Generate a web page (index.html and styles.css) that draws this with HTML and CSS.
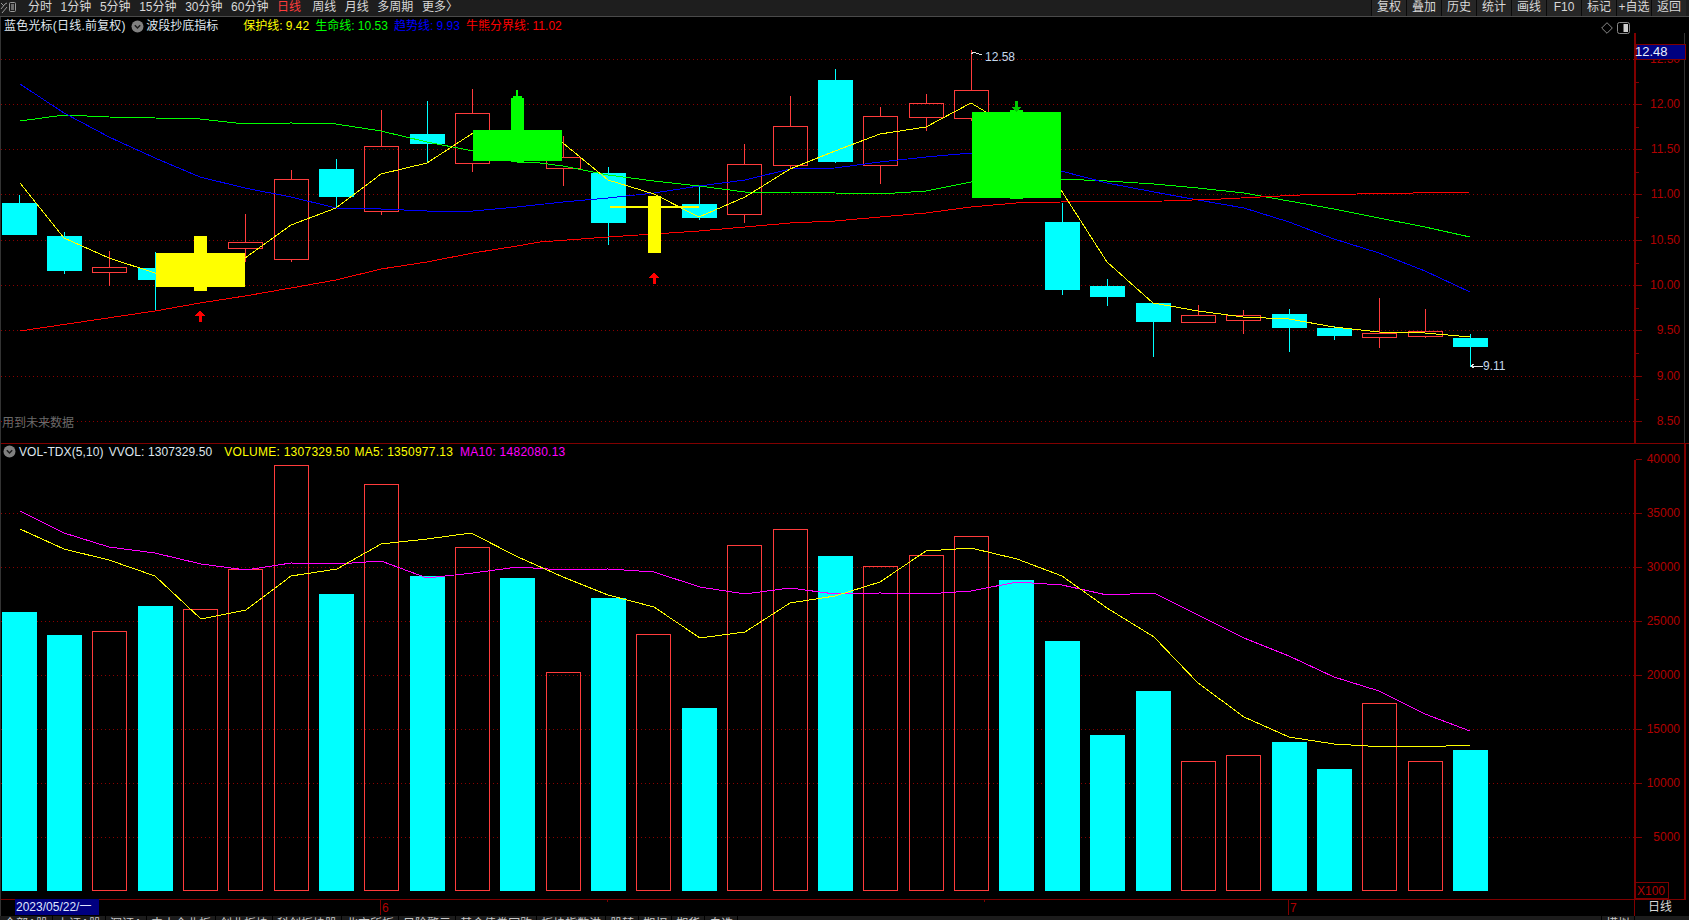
FILE: index.html
```html
<!DOCTYPE html>
<html lang="zh-CN">
<head>
<meta charset="utf-8">
<title>蓝色光标 日线</title>
<link rel="stylesheet" href="styles.css">
</head>
<body>
<div class="app">
  <header class="topbar">
    <svg class="app-icon" width="17" height="13" viewBox="0 0 17 13"><path class="app-icon-line" d="M1 2l3 3M1 8l4-5 2-1M2 12l5-6"/><rect class="app-icon-line" x="9.5" y="1.5" width="6" height="9" rx="1"/><path class="app-icon-fill" d="M11 3h3v6h-3z"/></svg>
    <nav class="periods">
      <span>分时</span><span>1分钟</span><span>5分钟</span><span>15分钟</span><span>30分钟</span><span>60分钟</span><span class="period-on">日线</span><span>周线</span><span>月线</span><span>多周期</span><span>更多〉</span>
    </nav>
    <div class="tools">
      <span>复权</span><span>叠加</span><span>历史</span><span>统计</span><span>画线</span><span>F10</span><span>标记</span><span>+自选</span><span>返回</span>
    </div>
  </header>

  <main class="panels">
    <section class="panel">
      <div class="legend legend-price">
        <span class="title title-wide">蓝色光标(日线.前复权)</span>
        <svg class="badge" width="13" height="13" viewBox="0 0 13 13"><circle class="badge-disc" cx="6.5" cy="6.5" r="6"/><path class="badge-mark" d="M3.8 5.2l2.7 2.8 2.7-2.8"/></svg>
        <span class="title">波段抄底指标</span>
        <span class="readouts">
          <span class="c-yellow">保护线: 9.42</span>
          <span class="c-green">生命线: 10.53</span>
          <span class="c-blue">趋势线: 9.93</span>
          <span class="c-red">牛熊分界线: 11.02</span>
        </span>
        <span class="corner-icons">
          <svg width="12" height="12" viewBox="0 0 12 12"><path class="corner-line" d="M6 .7L11.3 6 6 11.3.7 6z"/></svg>
          <svg width="13" height="12" viewBox="0 0 13 12"><rect class="corner-line" x=".5" y=".5" width="12" height="11" rx="2"/><path class="corner-fill" d="M6.5 2H11v8H6.5z"/></svg>
        </span>
      </div>
      <svg class="chart" width="1688" height="410" viewBox="1 33 1688 410" shape-rendering="crispEdges">
        <path class="grid" d="M1 59.5H1634M1 104.5H1634M1 149.5H1634M1 194.5H1634M1 240.5H1634M1 285.5H1634M1 330.5H1634M1 376.5H1634M1 421.5H1634"/>
        <!-- axis -->
        <path class="axis" d="M1634.5 33V443M1635.5 33V443"/>
        <path class="edge" d="M1684.5 33V443"/>
        <path class="axis" d="M1636 59.5h6M1636 104.5h6M1636 149.5h6M1636 194.5h6M1636 240.5h6M1636 285.5h6M1636 330.5h6M1636 376.5h6M1636 421.5h6M1636 82.5h3M1636 127.5h3M1636 172.5h3M1636 217.5h3M1636 263.5h3M1636 308.5h3M1636 353.5h3M1636 399.5h3"/>
        <g class="axis-label">
          <text x="1680" y="63">12.50</text><text x="1680" y="108">12.00</text><text x="1680" y="153">11.50</text><text x="1680" y="198">11.00</text><text x="1680" y="244">10.50</text><text x="1680" y="289">10.00</text><text x="1680" y="334">9.50</text><text x="1680" y="380">9.00</text><text x="1680" y="425">8.50</text>
        </g>
        <rect class="price-box" x="1636" y="44.5" width="49" height="15"/>
        <text class="price-text" x="1635" y="55.5">12.48</text>

        <!-- candles: falling -->
        <path class="wick-down" d="M19.5 195V203M64.5 232V236M64.5 271V274M155.5 252V311M336.5 159V169M336.5 197V208M427.5 101V134M427.5 144V163M608.5 167V173M608.5 223V245M699.5 187V204M699.5 218V220M835.5 69V80M835.5 162V163M1062.5 203V222M1062.5 290V295M1107.5 279V286M1107.5 297V306M1153.5 322V357M1289.5 309V314M1289.5 328V352M1334.5 326V328M1334.5 336V340M1470.5 334V338M1470.5 347V367"/>
        <g class="body-down">
          <rect x="2" y="203" width="35" height="32"/><rect x="47" y="236" width="35" height="35"/><rect x="138" y="268" width="35" height="12"/><rect x="319" y="169" width="35" height="28"/><rect x="410" y="134" width="35" height="10"/><rect x="591" y="173" width="35" height="50"/><rect x="682" y="204" width="35" height="14"/><rect x="818" y="80" width="35" height="82"/><rect x="1045" y="222" width="35" height="68"/><rect x="1090" y="286" width="35" height="11"/><rect x="1136" y="303" width="35" height="19"/><rect x="1272" y="314" width="35" height="14"/><rect x="1317" y="328" width="35" height="8"/><rect x="1453" y="338" width="35" height="9"/>
        </g>
        <!-- candles: rising -->
        <path class="wick-up" d="M109.5 251V267M109.5 272V286M245.5 214V242M245.5 248V262M291.5 170V179M291.5 259V262M381.5 110V146M381.5 211V215M472.5 89V113M472.5 163V172M563.5 136V157M563.5 168V186M744.5 144V164M744.5 214V223M790.5 96V126M790.5 165V168M880.5 107V116M880.5 165V184M926.5 94V103M926.5 117V131M971.5 50V90M971.5 118V121M1198.5 305V315M1198.5 322V323M1243.5 310V315M1243.5 320V334M1379.5 298V333M1379.5 337V348M1425.5 309V331M1425.5 336V338"/>
        <g class="body-up">
          <rect x="92.5" y="267.5" width="34" height="5"/><rect x="228.5" y="242.5" width="34" height="6"/><rect x="274.5" y="179.5" width="34" height="80"/><rect x="364.5" y="146.5" width="34" height="65"/><rect x="455.5" y="113.5" width="34" height="50"/><rect x="546.5" y="157.5" width="34" height="11"/><rect x="727.5" y="164.5" width="34" height="50"/><rect x="773.5" y="126.5" width="34" height="39"/><rect x="863.5" y="116.5" width="34" height="49"/><rect x="909.5" y="103.5" width="34" height="14"/><rect x="954.5" y="90.5" width="34" height="28"/><rect x="1181.5" y="315.5" width="34" height="7"/><rect x="1226.5" y="315.5" width="34" height="5"/><rect x="1362.5" y="333.5" width="34" height="4"/><rect x="1408.5" y="331.5" width="34" height="5"/>
        </g>
        <!-- moving averages -->
        <polyline class="ma-green" points="20,121 64,115 109,117 155,118 200,119 245,124 291,123 336,124 381,131 427,142 473,151 517,162 540,163 563,166 608,175 654,181 699,186 745,192 790,192 835,193 880,194 926,191 971,182 1016,178 1061,179 1107,181 1154,184 1198,188 1244,193 1289,201 1334,209 1379,218 1425,227 1470,237"/>
        <polyline class="ma-blue" points="20,84 64,113 109,137 155,158 200,177 245,188 291,197 336,208 381,209 427,211 473,211 517,207 563,202 608,198 654,193 699,186 745,180 790,169 835,168 880,162 926,157 971,153 1016,160 1061,171 1107,183 1154,192 1198,200 1244,208 1289,222 1334,239 1379,253 1425,271 1470,292"/>
        <polyline class="ma-red" points="20,331 155,311 200,303 245,296 291,288 336,280 381,269 427,262 473,253 517,246 540,242 608,237 654,234 699,231 745,227 790,223 835,221 880,217 926,213 971,207 1016,203 1061,202 1164,201 1221,199 1300,195 1357,194 1470,192"/>
        <polyline class="ma-yellow" points="20,183 64,238 109,258 155,273 200,280 245,258 291,225 336,208 381,174 427,163 473,133 517,135 563,143 608,180 654,194 699,217 745,197 790,169 835,151 880,134 926,127 971,103 1016,130 1061,190 1107,262 1153,303 1198,311 1243,317 1289,319 1334,327 1379,332 1425,333 1470,337"/>
        <!-- signals -->
        <g class="signal-yellow">
          <rect x="156" y="253" width="89" height="34"/><rect x="194" y="236" width="13" height="55"/><rect x="648" y="196" width="13" height="57"/><rect x="610" y="206" width="89" height="2"/>
        </g>
        <g class="signal-green">
          <rect x="473" y="130" width="89" height="31"/><rect x="511" y="98" width="13" height="64"/><rect x="516" y="90" width="2" height="8"/><rect x="513" y="96" width="9" height="2"/><rect x="972" y="112" width="89" height="86"/><rect x="1010" y="110" width="13" height="89"/>
        </g>
        <path class="arrow-green" d="M1015 101h3v6h4l-5.500 5-5.500-5h4z"/>
        <path class="arrow-red" d="M200 310l5 6h-3.500v6h-3v-6H195zM654 272l5 6h-3.500v6h-3v-6H649z"/>
        <!-- extremes -->
        <path class="pointer" d="M971 54l3-2 2 1 3 1h3M1471 366h12M1471 366l3-2M1471 366l3 2"/>
        <text class="extreme" x="985" y="61">12.58</text>
        <text class="extreme" x="1483" y="370">9.11</text>
      </svg>
      <p class="note">用到未来数据</p>
    </section>

    <section class="panel panel-volume">
      <div class="legend legend-volume">
        <svg class="badge" width="13" height="13" viewBox="0 0 13 13"><circle class="badge-disc" cx="6.5" cy="6.5" r="6"/><path class="badge-mark" d="M3.800 5.200l2.700 2.800 2.700-2.800"/></svg>
        <span class="title title-tight">VOL-TDX(5,10)</span>
        <span class="title title-tight">VVOL: 1307329.50</span>
        <span class="c-yellow vol-value vol-first">VOLUME: 1307329.50</span>
        <span class="c-yellow vol-value">MA5: 1350977.13</span>
        <span class="c-magenta vol-value vol-last">MA10: 1482080.13</span>
      </div>
      <svg class="chart" width="1688" height="439" viewBox="1 460 1688 439" shape-rendering="crispEdges">
        <path class="grid" d="M1 513.500H1634M1 567.500H1634M1 621.500H1634M1 675.500H1634M1 729.500H1634M1 783.500H1634M1 837.500H1634"/>
        <path class="axis" d="M1634.500 460V899M1635.500 460V899M1684.500 444V899M1685.500 444V899"/>
        <path class="axis" d="M1636 459.500h6M1636 513.500h6M1636 567.500h6M1636 621.500h6M1636 675.500h6M1636 729.500h6M1636 783.500h6M1636 837.500h6"/>
        <g class="axis-label">
          <text x="1680" y="463">40000</text><text x="1680" y="517">35000</text><text x="1680" y="571">30000</text><text x="1680" y="625">25000</text><text x="1680" y="679">20000</text><text x="1680" y="733">15000</text><text x="1680" y="787">10000</text><text x="1680" y="841">5000</text>
        </g>
        <rect class="unit-box" x="1635.500" y="882.500" width="33" height="16"/>
        <text class="unit-text" x="1637" y="895">X100</text>
        <g class="body-down">
          <rect x="2" y="612" width="35" height="279"/><rect x="47" y="635" width="35" height="256"/><rect x="138" y="606" width="35" height="285"/><rect x="319" y="594" width="35" height="297"/><rect x="410" y="576" width="35" height="315"/><rect x="500" y="578" width="35" height="313"/><rect x="591" y="598" width="35" height="293"/><rect x="682" y="708" width="35" height="183"/><rect x="818" y="556" width="35" height="335"/><rect x="999" y="580" width="35" height="311"/><rect x="1045" y="641" width="35" height="250"/><rect x="1090" y="735" width="35" height="156"/><rect x="1136" y="691" width="35" height="200"/><rect x="1272" y="742" width="35" height="149"/><rect x="1317" y="769" width="35" height="122"/><rect x="1453" y="750" width="35" height="141"/>
        </g>
        <g class="body-up">
          <rect x="92.500" y="631.500" width="34" height="259"/><rect x="183.500" y="609.500" width="34" height="281"/><rect x="228.500" y="569.500" width="34" height="321"/><rect x="274.500" y="465.500" width="34" height="425"/><rect x="364.500" y="484.500" width="34" height="406"/><rect x="455.500" y="547.500" width="34" height="343"/><rect x="546.500" y="672.500" width="34" height="218"/><rect x="636.500" y="634.500" width="34" height="256"/><rect x="727.500" y="545.500" width="34" height="345"/><rect x="773.500" y="529.500" width="34" height="361"/><rect x="863.500" y="566.500" width="34" height="324"/><rect x="909.500" y="555.500" width="34" height="335"/><rect x="954.500" y="536.500" width="34" height="354"/><rect x="1181.500" y="761.500" width="34" height="129"/><rect x="1226.500" y="755.500" width="34" height="135"/><rect x="1362.500" y="703.500" width="34" height="187"/><rect x="1408.500" y="761.500" width="34" height="129"/>
        </g>
        <polyline class="ma-magenta" points="20,511 64,533 109,547 155,553 201,564 246,570 291,563 337,564 381,561 427,578 473,573 518,567 563,570 608,569 654,572 700,587 745,594 790,588 835,594 880,593 926,594 971,591 1017,582 1062,585 1107,595 1154,593 1198,615 1244,638 1289,656 1334,677 1379,691 1425,714 1470,731"/>
        <polyline class="ma-yellow" points="20,529 64,549 109,560 155,576 201,619 246,610 291,576 337,569 381,544 427,539 471,533 518,557 563,577 608,595 654,607 700,638 745,632 790,603 835,596 880,582 926,551 971,548 1017,559 1062,576 1107,608 1154,637 1198,683 1244,717 1289,737 1334,744 1368,746 1446,746 1470,745"/>
      </svg>
    </section>

    <div class="timebar">
      <svg class="time-svg" width="1688" height="17" viewBox="1 899 1688 17" shape-rendering="crispEdges">
        <path class="axis" d="M1 899.500H1686M1634.500 899V916M1635.500 899V900M380.500 899V915M607.500 899V902M984.500 899V902M1288.500 899V915"/>
        <rect class="date-box" x="15" y="899" width="84" height="16"/>
        <text class="date-text" x="16" y="911">2023/05/22/一</text>
        <text class="tick-text" x="382" y="912">6</text>
        <text class="tick-text" x="1290" y="912">7</text>
        <text class="period-text" x="1648" y="911">日线</text>
      </svg>
    </div>
  </main>

  <footer class="tabs">
    <span>全部A股</span><span>上证A股</span><span>深证A</span><span>中小企业板</span><span>创业板块</span><span>科创板块股</span><span>北交所板</span><span>风险警示</span><span>基金债券回购</span><span>板块指数港</span><span>股转</span><span>期权</span><span>期货</span><span>自选</span>
    <span class="tabs-end">模拟</span>
  </footer>
</div>
</body>
</html>
```

FILE: styles.css
```css
* { box-sizing: border-box; }
html, body { margin: 0; padding: 0; background: #000; }
body {
  width: 1689px;
  height: 920px;
  overflow: hidden;
  font: 12px/16px "Liberation Sans", "Noto Sans CJK SC", sans-serif;
  color: #d8d8d8;
}
.app { width: 1689px; height: 920px; display: flex; flex-direction: column; }

/* top toolbar */
.topbar {
  height: 17px;
  flex: none;
  display: flex;
  align-items: flex-start;
  background: #1e1e1e;
  border-bottom: 1px solid #4a4a4a;
  line-height: 14px;
  white-space: nowrap;
}
.app-icon { flex: none; margin-top: 1px; }
.app-icon-line { fill: none; stroke: #9a9a9a; stroke-width: 1; }
.app-icon-fill { fill: #6c6c6c; }
.periods { display: flex; gap: 8.6px; margin-left: 11px; }
.period-on { color: #ff3c3c; margin-right: 2.5px; }
.tools { display: flex; margin-left: auto; margin-right: 3px; }
.tools span {
  width: 35px;
  height: 16px;
  text-align: center;
  background: #262626;
  border-left: 1px solid #0a0a0a;
}

/* panels */
.panels { flex: 1; display: flex; flex-direction: column; border-left: 1px solid #333; min-height: 0; }
.panel { position: relative; }
.panel-volume { border-top: 1px solid #800000; }
.legend {
  height: 16px;
  display: flex;
  align-items: center;
  gap: 5px;
  padding-left: 2px;
  white-space: nowrap;
}
.legend-price { padding: 2px 0 0 3px; }
.legend-volume { padding-bottom: 1px; }
.legend-volume .badge { margin-right: -2px; }
.legend-price .badge { margin-right: -2.6px; }
.title { color: #dfe6ee; }
.title-wide { letter-spacing: .2px; }
.title-tight { letter-spacing: .1px; }
.badge { flex: none; }
.badge-disc { fill: #808080; }
.badge-mark { fill: none; stroke: #1c1c1c; stroke-width: 1.5; }
.readouts { display: flex; gap: 6px; margin-left: 20px; }
.vol-value { letter-spacing: .25px; }
.vol-first { margin-left: 7px; }
.vol-last { margin-left: 2px; }
.c-yellow { color: #ffff00; }
.c-green { color: #00ff00; }
.c-blue { color: #0000ff; }
.c-red { color: #ff0000; }
.c-magenta { color: #ff00ff; }
.corner-icons { display: flex; align-items: center; gap: 4px; position: absolute; left: 1600px; top: 5px; }
.corner-line { fill: none; stroke: #8a8a8a; stroke-width: 1; }
.corner-fill { fill: #cfcfcf; }
.note { position: absolute; left: 1px; top: 398px; margin: 0; color: #6a6a6a; }

/* charts */
.chart { display: block; overflow: visible; font: 12px "Liberation Sans", sans-serif; }
.grid { fill: none; stroke: #8a0000; stroke-width: 1; stroke-dasharray: 1 3; }
.axis { fill: none; stroke: #800000; stroke-width: 1; }
.edge { fill: none; stroke: #333; stroke-width: 1; }
.axis-label { fill: #b00000; text-anchor: end; }
.price-box { fill: #000080; stroke: #800000; stroke-width: 1; }
.price-text { fill: #e8f0ff; font-size: 13px; }
.unit-box { fill: none; stroke: #800000; stroke-width: 1; }
.unit-text { fill: #b00000; }
.wick-down { fill: none; stroke: #00ffff; stroke-width: 1; }
.wick-up { fill: none; stroke: #ff3c3c; stroke-width: 1; }
.body-down { fill: #00ffff; }
.body-up { fill: none; stroke: #ff3c3c; stroke-width: 1; }
.ma-green, .ma-blue, .ma-red, .ma-yellow, .ma-magenta { fill: none; stroke-width: 1; }
.ma-green { stroke: #00ff00; }
.ma-blue { stroke: #0000ff; }
.ma-red { stroke: #ff0000; }
.ma-yellow { stroke: #ffff00; }
.ma-magenta { stroke: #ff00ff; }
.signal-yellow { fill: #ffff00; }
.signal-green { fill: #00ff00; }
.arrow-green { fill: #00c800; }
.arrow-red { fill: #ff0000; }
.pointer { fill: none; stroke: #e6e6e6; stroke-width: 1; }
.extreme { fill: #c4d8ec; }

/* time axis */
.timebar { height: 17px; flex: none; }
.time-svg { display: block; font: 12px "Liberation Sans", "Noto Sans CJK SC", sans-serif; }
.date-box { fill: #000080; }
.date-text { fill: #dfe6ff; }
.tick-text { fill: #b00000; }
.period-text { fill: #d8d8d8; }

/* clipped tab strip */
.tabs {
  height: 4px;
  flex: none;
  display: flex;
  overflow: hidden;
  background: #1c1c1c;
  line-height: 12px;
  white-space: nowrap;
}
.tabs span { padding: 2px 4px 0; border-right: 1px solid #000; color: #c8c8c8; }
.tabs .tabs-end { margin-left: auto; margin-right: 54px; border-left: 1px solid #000; }
```
